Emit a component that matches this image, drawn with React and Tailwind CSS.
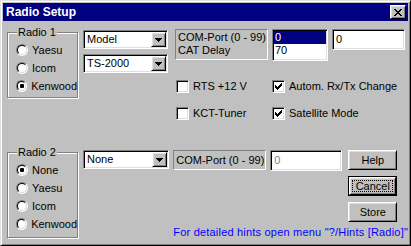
const FONT = "font-['Liberation_Sans',Arial,sans-serif]";

/* ── Win95 bevels ── */
const RAISED =
  "border border-t-white border-l-white border-r-black border-b-black shadow-[inset_1px_1px_#dfdfdf,inset_-1px_-1px_#808080]";
const SUNKEN =
  "border border-t-[#808080] border-l-[#808080] border-r-white border-b-white shadow-[inset_1px_1px_#000,inset_-1px_-1px_#dfdfdf] p-[1px]";

const CloseGlyph = () => (
  <svg width="8" height="7" viewBox="0 0 8 7" fill="#000" shapeRendering="crispEdges">
    <path d="M0 0h2v1H0zM6 0h2v1H6zM1 1h2v1H1zM5 1h2v1H5zM2 2h4v1H2zM3 3h2v1H3zM2 4h4v1H2zM1 5h2v1H1zM5 5h2v1H5zM0 6h2v1H0zM6 6h2v1H6z" />
  </svg>
);

const ArrowDown = () => (
  <svg width="7" height="4" viewBox="0 0 7 4" fill="#000" shapeRendering="crispEdges">
    <path d="M0 0h7v1H0zM1 1h5v1H1zM2 2h3v1H2zM3 3h1v1H3z" />
  </svg>
);

const CheckGlyph = () => (
  <svg width="7" height="7" viewBox="0 0 7 7" fill="#000" shapeRendering="crispEdges">
    <path d="M0 2h1v3H0zM1 3h1v3H1zM2 4h1v3H2zM3 3h1v3H3zM4 2h1v3H4zM5 1h1v3H5zM6 0h1v3H6z" />
  </svg>
);

/* ── Controls ── */
const Radio = ({ label, checked = false }) => (
  <div className="h-[18px] flex items-center">
    <div className="w-[12px] h-[12px] rounded-full border border-t-[#808080] border-l-[#808080] border-r-white border-b-white flex">
      <div className="flex-1 rounded-full bg-white border border-t-black border-l-black border-r-[#dfdfdf] border-b-[#dfdfdf] flex items-center justify-center">
        {checked && <div className="w-[4px] h-[4px] rounded-[1px] bg-black" />}
      </div>
    </div>
    <span className="ml-[4px]">{label}</span>
  </div>
);

const GroupBox = ({ label, className, children }) => (
  <div className={`relative border border-[#808080] shadow-[inset_1px_1px_#fff,1px_1px_#fff] pl-[8px] pt-[8px] ${className}`}>
    <span className="absolute -top-[7px] left-[9px] px-[1px] bg-[#c0c0c0]">{label}</span>
    {children}
  </div>
);

const Combo = ({ value, className }) => (
  <div className={`${SUNKEN} bg-white h-[19px] flex ${className}`}>
    <span className="flex-1 pl-[2px] flex items-center">{value}</span>
    <div className={`${RAISED} bg-[#c0c0c0] w-[15px] flex items-center justify-center`}>
      <ArrowDown />
    </div>
  </div>
);

const Check = ({ label, checked = false, className = "" }) => (
  <div className={`flex items-center ${className}`}>
    <div className={`${SUNKEN} p-0 w-[13px] h-[13px] bg-white flex items-center justify-center`}>
      {checked && <CheckGlyph />}
    </div>
    <span className="ml-[4px]">{label}</span>
  </div>
);

const Static = ({ className, children }) => (
  <div className={`border border-t-[#808080] border-l-[#808080] border-r-white border-b-white pl-[2px] ${className}`}>
    {children}
  </div>
);

const Button = ({ label, isDefault = false }) =>
  isDefault ? (
    <div className="h-[20px] border border-black flex">
      <div className={`${RAISED} flex-1 p-[2px] flex`}>
        <div className="flex-1 border border-dotted border-black flex items-center justify-center">{label}</div>
      </div>
    </div>
  ) : (
    <div className={`${RAISED} h-[20px] flex items-center justify-center`}>{label}</div>
  );

/* ─── DIALOG ─── */
export default function App() {
  return (
    <div className={`w-[411px] h-[246px] bg-[#c0c0c0] ${FONT} text-[11px] leading-[13px] text-black border border-t-[#dfdfdf] border-l-[#dfdfdf] border-r-black border-b-black shadow-[inset_1px_1px_#fff,inset_-1px_-1px_#808080] p-[2px] flex flex-col`}>

      {/* Title bar */}
      <div className="h-[18px] bg-[#000080] flex items-center justify-between pl-[3px] pr-[2px]">
        <span className="text-white font-bold text-[12px]">Radio Setup</span>
        <div className={`${RAISED} bg-[#c0c0c0] w-[16px] h-[14px] flex items-center justify-center`}>
          <CloseGlyph />
        </div>
      </div>

      {/* Radio 1 */}
      <div className="h-[129px] flex items-start">
        <GroupBox label="Radio 1" className="ml-[4px] mt-[11px] w-[71px] h-[66px]">
          <Radio label="Yaesu" />
          <Radio label="Icom" />
          <Radio label="Kenwood" checked />
        </GroupBox>

        <div className="ml-[5px] mt-[9px] flex flex-col gap-[5px]">
          <Combo value="Model" className="w-[85px]" />
          <Combo value="TS-2000" className="w-[85px]" />
        </div>

        <div className="ml-[7px] mt-[8px] flex flex-col">
          <div className="flex items-start">
            <Static className="w-[93px] h-[31px] pt-[1px]">
              <div>COM-Port (0 - 99)</div>
              <div>CAT Delay</div>
            </Static>
            <div className={`${SUNKEN} ml-[4px] w-[56px] h-[32px] bg-white`}>
              <div className="h-[13px] bg-[#000080] text-white pl-[1px]">0</div>
              <div className="h-[13px] pl-[1px]">70</div>
            </div>
            <div className={`${SUNKEN} ml-[4px] w-[73px] h-[21px] bg-white flex items-center pl-[3px]`}>0</div>
          </div>

          <div className="mt-[19px] grid grid-cols-[97px_1fr] h-[13px]">
            <Check label="RTS +12 V" className="ml-[1px]" />
            <Check label="Autom. Rx/Tx Change" checked />
          </div>
          <div className="mt-[14px] grid grid-cols-[97px_1fr] h-[13px]">
            <Check label="KCT-Tuner" className="ml-[1px]" />
            <Check label="Satellite Mode" checked />
          </div>
        </div>
      </div>

      {/* Radio 2 */}
      <div className="flex items-start">
        <GroupBox label="Radio 2" className="ml-[4px] mt-[2px] w-[71px] h-[86px]">
          <Radio label="None" checked />
          <Radio label="Yaesu" />
          <Radio label="Icom" />
          <Radio label="Kenwood" />
        </GroupBox>

        <Combo value="None" className="ml-[5px] w-[88px]" />

        <div className="ml-[4px] flex flex-col">
          <div className="flex items-start">
            <Static className="w-[93px] h-[20px] flex items-center">COM-Port (0 - 99)</Static>
            <div className={`${SUNKEN} ml-[4px] w-[72px] h-[21px] bg-white flex items-center pl-[3px] text-[#808080]`}>0</div>
            <div className="ml-[6px] w-[49px] flex flex-col gap-[6px]">
              <Button label="Help" />
              <Button label="Cancel" isDefault />
              <Button label="Store" />
            </div>
          </div>
          <div className="mt-[4px] text-[#0000ff] whitespace-nowrap tracking-[0.2px]">For detailed hints open menu "?/Hints [Radio]"</div>
        </div>
      </div>
    </div>
  );
}
